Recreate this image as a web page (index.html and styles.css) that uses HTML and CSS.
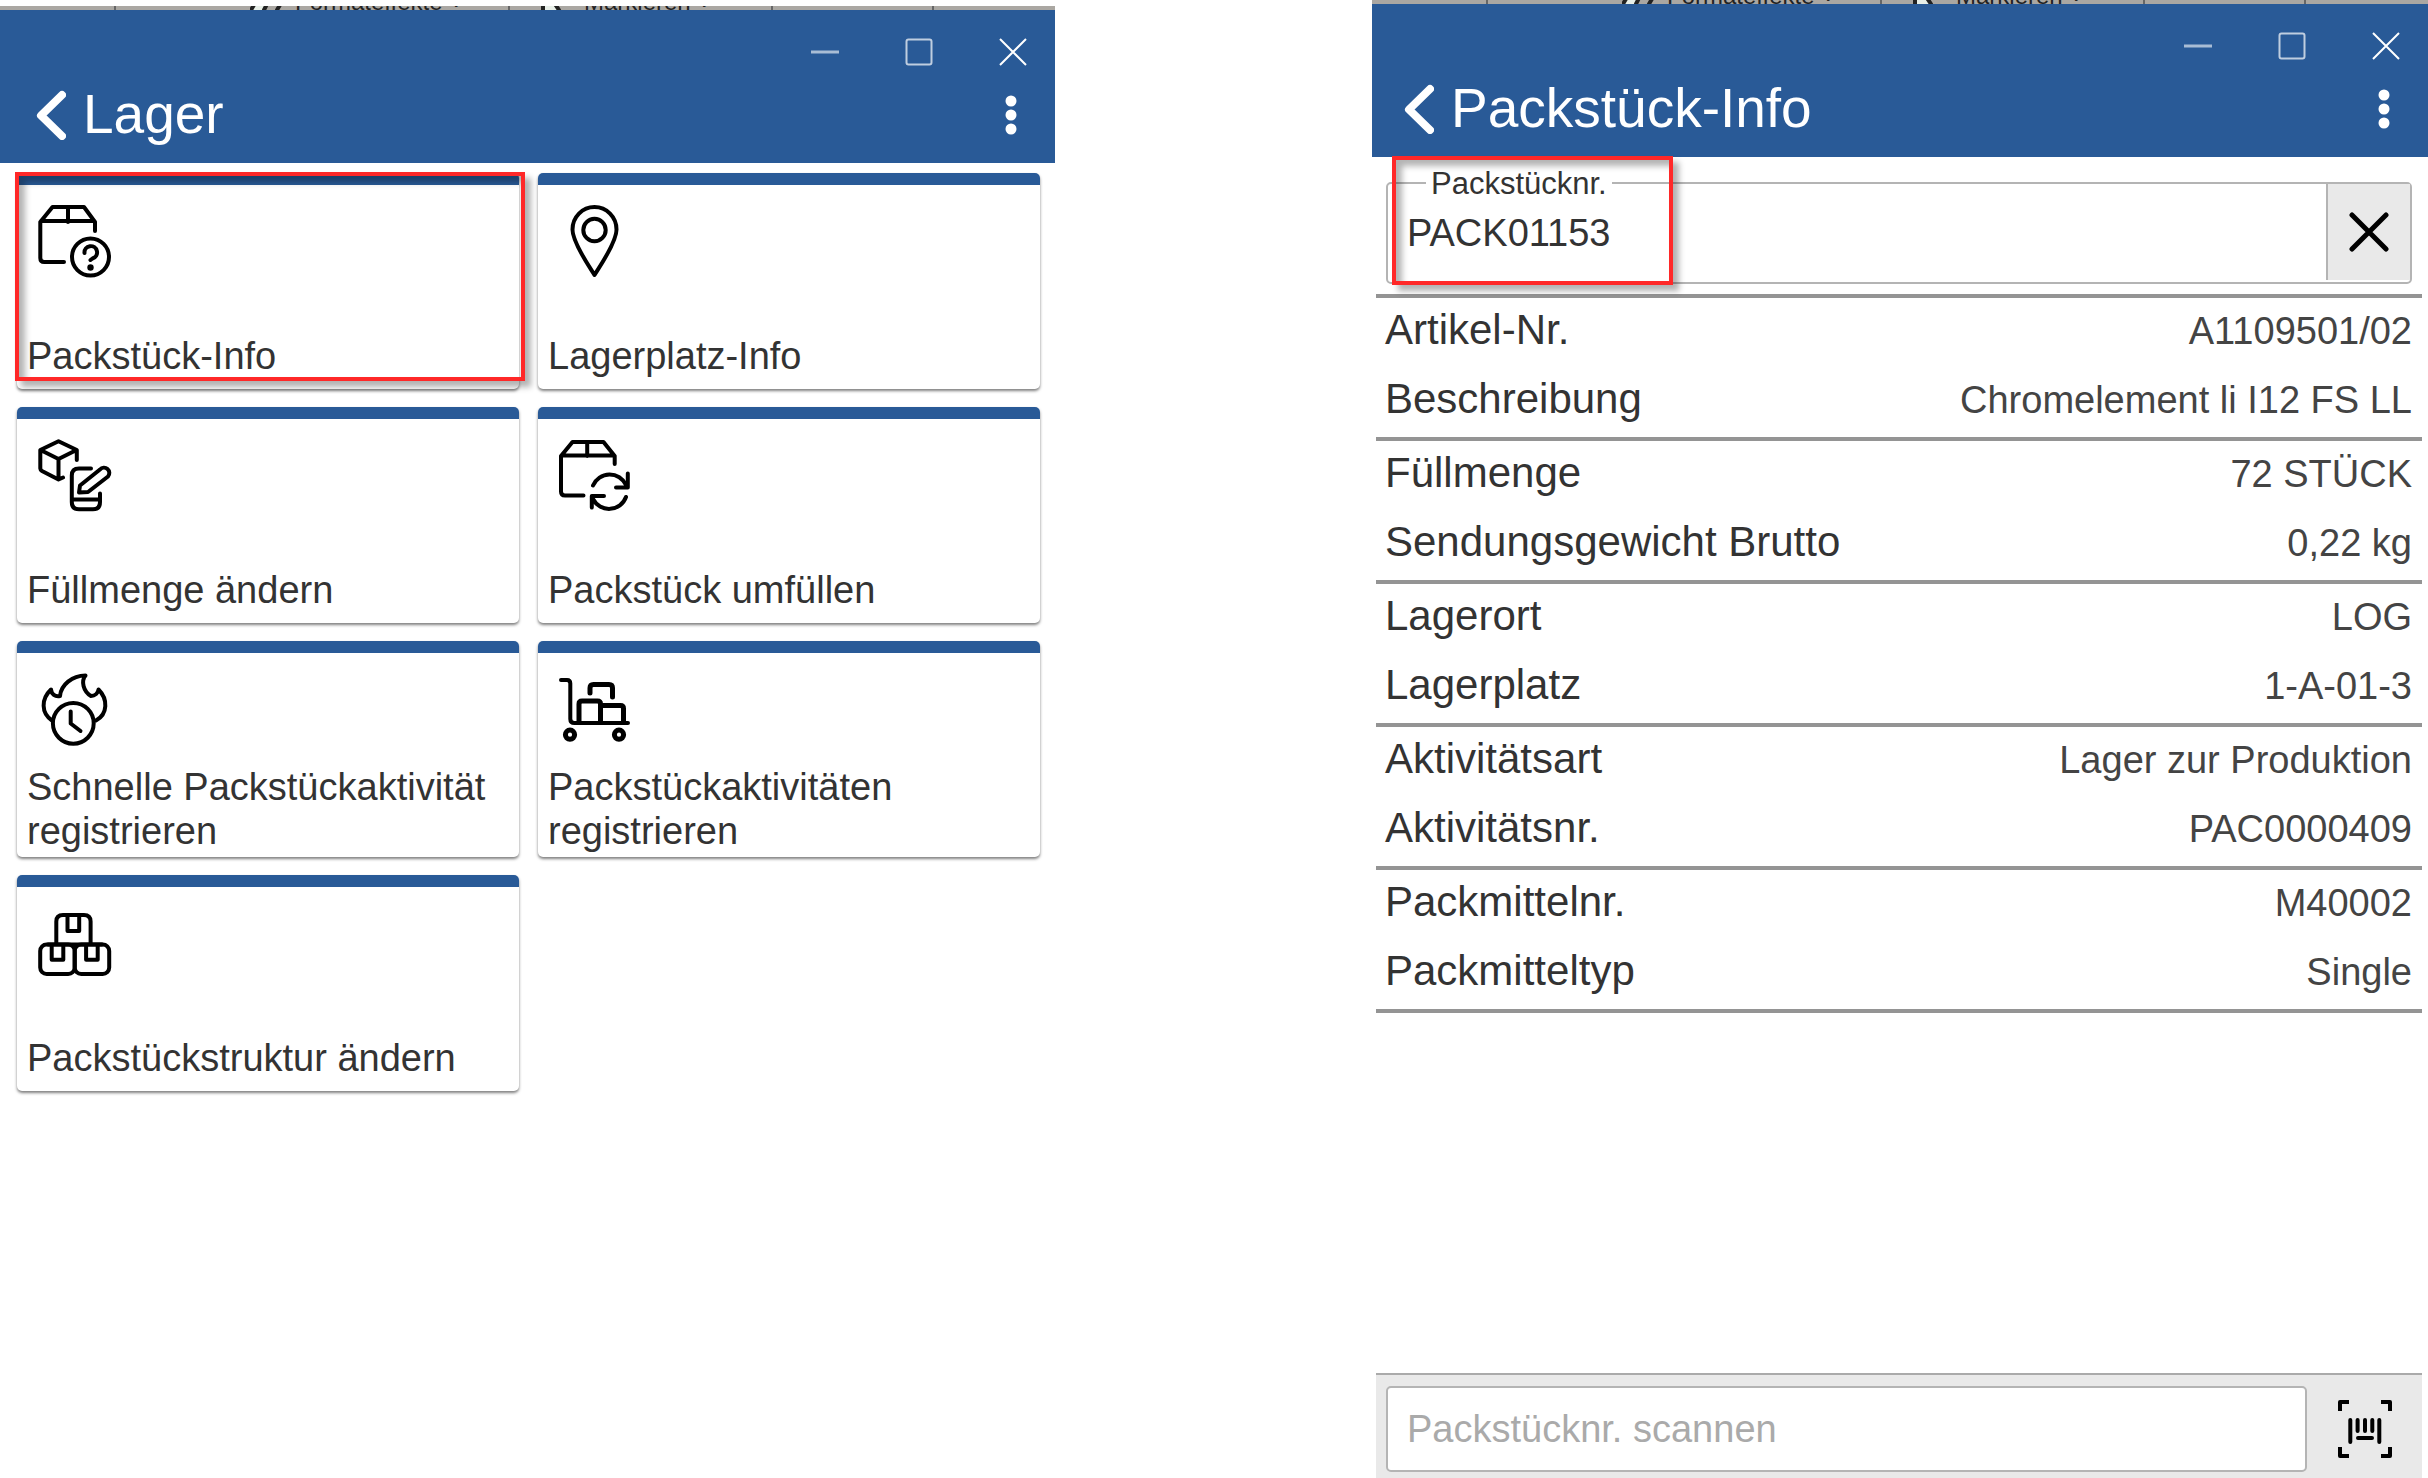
FILE: index.html
```html
<!DOCTYPE html>
<html lang="de">
<head>
<meta charset="utf-8">
<meta name="viewport" content="width=device-width, initial-scale=1">
<title>Lager – Packstück-Info</title>
<link rel="stylesheet" href="styles.css">
</head>
<body>
<div class="page">

  <section class="window window--menu">
    <div class="strip" aria-hidden="true">
      <span class="strip__cell strip__cell--first"></span>
      <span class="strip__cell strip__cell--effects"><svg class="strip__icon" viewBox="0 0 36 16"><path class="strip__paper" d="M8 4H20L14 16H1Z"/><path d="M8 4L1 16M20 4L14 16M34 4L27 16"/></svg>Formateffekte ˅</span>
      <span class="strip__cell strip__cell--mark"><svg class="strip__icon" viewBox="0 0 36 16"><path class="strip__paper" d="M4 0H12L20 16H4Z"/><path d="M4 0V16M12 4L20 16"/></svg>Markieren ˅</span>
      <span class="strip__cell strip__cell--last"></span>
    </div>
    <header class="header">
      <div class="controls">
        <button class="control" type="button" aria-label="Minimieren"><svg width="28" height="28" viewBox="0 0 28 28"><path d="M0 14H28" stroke-width="3" opacity=".6"/></svg></button>
        <button class="control" type="button" aria-label="Maximieren"><svg width="28" height="28" viewBox="0 0 28 28"><rect x="1.500" y="1.500" width="25" height="25" rx="2" stroke-width="2" opacity=".7"/></svg></button>
        <button class="control" type="button" aria-label="Schließen"><svg width="28" height="28" viewBox="0 0 28 28"><path d="M1 1L27 27M27 1L1 27" stroke-width="2"/></svg></button>
      </div>
      <div class="titlebar">
        <a class="back" href="#" aria-label="Zurück"><svg width="30" height="50" viewBox="0 0 30 50"><path d="M26 5L5 25.500L26 46" stroke-width="8"/></svg></a>
        <h1 class="title">Lager</h1>
        <button class="more" type="button" aria-label="Menü"><svg width="12" height="40" viewBox="0 0 12 40"><circle cx="6" cy="6" r="5.500"/><circle cx="6" cy="20" r="5.500"/><circle cx="6" cy="34" r="5.500"/></svg></button>
      </div>
    </header>

    <ul class="tiles">
      <li class="tiles__item">
        <a class="tile" href="#">
          <svg class="tile__icon" viewBox="0 0 74 74"><path d="M57 26V17L46 2H14.500L2.300 17V53Q2.300 57 6.300 57H26M3 16H56M30 2V17"/><circle cx="52.500" cy="52" r="18.500"/><path d="M46.500 48A6.300 6.300 0 1 1 54.500 53.500L52.500 55"/><circle class="solid" cx="52.500" cy="62.500" r="3.200"/></svg>
          <span class="tile__label">Packstück-Info</span>
        </a>
        <span class="marker marker--tile"></span>
      </li>
      <li class="tiles__item">
        <a class="tile" href="#">
          <svg class="tile__icon" viewBox="0 0 74 74"><path d="M35.500 70C32 64 13.500 38 13.500 24.500A22 22.500 0 0 1 57.500 24.500C57.500 38 39 64 35.500 70Z"/><circle cx="35.500" cy="25" r="11.200"/></svg>
          <span class="tile__label">Lagerplatz-Info</span>
        </a>
      </li>
      <li class="tiles__item">
        <a class="tile" href="#">
          <svg class="tile__icon" viewBox="0 0 74 74"><path d="M38.800 21V11L20.500 2.300L2.300 11V29.500Q2.300 31 4 32L20.500 40.500L25 38.500M2.500 11L20.500 20L38.500 11M20.500 20V40"/><path d="M53 29.500H41Q33.800 29.500 33.800 36.500V63Q33.800 70.300 41 70.300H55Q62 70.300 62 63V54.500M34 60.500H61.500"/><path d="M41 53.500L42 46.500L62 30.500A5.200 5.200 0 0 1 70 37.500L50 53Z"/></svg>
          <span class="tile__label">Füllmenge ändern</span>
        </a>
      </li>
      <li class="tiles__item">
        <a class="tile" href="#">
          <svg class="tile__icon" viewBox="0 0 74 74"><path d="M55.700 25V17L44.500 3H13.500L2 17V52.500Q2 56.500 6 56.500H24.500M2.500 16.500H55M28.200 3V17"/><path d="M34 46.500A18 18 0 0 1 67 46M68.800 34.500V48.500H57M67 58A18 18 0 0 1 34 60M32.800 68.500V57H45"/></svg>
          <span class="tile__label">Packstück umfüllen</span>
        </a>
      </li>
      <li class="tiles__item">
        <a class="tile" href="#">
          <svg class="tile__icon" viewBox="0 0 74 74"><circle cx="35.300" cy="50.300" r="20.400"/><path d="M32.700 38.500V50.500L42.500 58"/><path d="M14 47.500C3 40 3 26 13 16.500C13.500 21 17 24 22 23C23 12 34 2.500 47.500 2.500C43 8 45 18 53 23C57 23 60 20 60.500 16.500C70 26 70 41 58 47.500"/></svg>
          <span class="tile__label">Schnelle Packstückaktivität registrieren</span>
        </a>
      </li>
      <li class="tiles__item">
        <a class="tile" href="#">
          <svg class="tile__icon" viewBox="0 0 74 74"><path d="M2 7H8Q11.300 7 11.300 10.500V46Q11.300 50 15.500 50H69"/><path stroke-width="5" d="M20 49V31Q20 28 23 28H38.500Q41.500 28 41.500 31V49M42 32.500H61.500Q64.500 32.500 64.500 35.500V49M31 20V15Q31 11.500 34.500 11.500H50Q53.500 11.500 53.500 15V24"/><circle stroke-width="5" cx="11" cy="61.700" r="4.600"/><circle stroke-width="5" cx="60" cy="61.700" r="4.600"/></svg>
          <span class="tile__label">Packstückaktivitäten registrieren</span>
        </a>
      </li>
      <li class="tiles__item">
        <a class="tile" href="#">
          <svg class="tile__icon" viewBox="0 0 74 74"><path d="M18.300 37V14.500Q18.300 8 25 8H46Q52.600 8 52.600 14.500V37M29.500 8V24H41.200V8"/><rect x="2.200" y="37.500" width="34.500" height="29.500" rx="6.500"/><rect x="36.700" y="37.500" width="34.500" height="29.500" rx="6.500"/><path d="M13.700 38V52.800H25.300V38M48.100 38V52.800H59.700V38"/><path d="M10 37.500H64"/></svg>
          <span class="tile__label">Packstückstruktur ändern</span>
        </a>
      </li>
    </ul>
  </section>

  <section class="window window--detail">
    <div class="strip" aria-hidden="true">
      <span class="strip__cell strip__cell--first"></span>
      <span class="strip__cell strip__cell--effects"><svg class="strip__icon" viewBox="0 0 36 16"><path class="strip__paper" d="M8 4H20L14 16H1Z"/><path d="M8 4L1 16M20 4L14 16M34 4L27 16"/></svg>Formateffekte ˅</span>
      <span class="strip__cell strip__cell--mark"><svg class="strip__icon" viewBox="0 0 36 16"><path class="strip__paper" d="M4 0H12L20 16H4Z"/><path d="M4 0V16M12 4L20 16"/></svg>Markieren ˅</span>
      <span class="strip__cell strip__cell--last"></span>
    </div>
    <header class="header">
      <div class="controls">
        <button class="control" type="button" aria-label="Minimieren"><svg width="28" height="28" viewBox="0 0 28 28"><path d="M0 14H28" stroke-width="3" opacity=".6"/></svg></button>
        <button class="control" type="button" aria-label="Maximieren"><svg width="28" height="28" viewBox="0 0 28 28"><rect x="1.500" y="1.500" width="25" height="25" rx="2" stroke-width="2" opacity=".7"/></svg></button>
        <button class="control" type="button" aria-label="Schließen"><svg width="28" height="28" viewBox="0 0 28 28"><path d="M1 1L27 27M27 1L1 27" stroke-width="2"/></svg></button>
      </div>
      <div class="titlebar">
        <a class="back" href="#" aria-label="Zurück"><svg width="30" height="50" viewBox="0 0 30 50"><path d="M26 5L5 25.500L26 46" stroke-width="8"/></svg></a>
        <h1 class="title">Packstück-Info</h1>
        <button class="more" type="button" aria-label="Menü"><svg width="12" height="40" viewBox="0 0 12 40"><circle cx="6" cy="6" r="5.500"/><circle cx="6" cy="20" r="5.500"/><circle cx="6" cy="34" r="5.500"/></svg></button>
      </div>
    </header>

    <div class="lookup">
      <div class="field">
        <label class="field__label" for="package">Packstücknr.</label>
        <input class="field__input" id="package" type="text" value="PACK01153">
        <button class="field__clear" type="button" aria-label="Löschen"><svg width="40" height="40" viewBox="0 0 40 40"><path d="M3 3L37 37M37 3L3 37"/></svg></button>
      </div>
      <span class="marker marker--field"></span>
    </div>

    <div class="details">
      <dl class="group">
        <div class="row"><dt>Artikel-Nr.</dt><dd>A1109501/02</dd></div>
        <div class="row"><dt>Beschreibung</dt><dd>Chromelement li I12 FS LL</dd></div>
      </dl>
      <dl class="group">
        <div class="row"><dt>Füllmenge</dt><dd>72 STÜCK</dd></div>
        <div class="row"><dt>Sendungsgewicht Brutto</dt><dd>0,22 kg</dd></div>
      </dl>
      <dl class="group">
        <div class="row"><dt>Lagerort</dt><dd>LOG</dd></div>
        <div class="row"><dt>Lagerplatz</dt><dd>1-A-01-3</dd></div>
      </dl>
      <dl class="group">
        <div class="row"><dt>Aktivitätsart</dt><dd>Lager zur Produktion</dd></div>
        <div class="row"><dt>Aktivitätsnr.</dt><dd>PAC0000409</dd></div>
      </dl>
      <dl class="group">
        <div class="row"><dt>Packmittelnr.</dt><dd>M40002</dd></div>
        <div class="row"><dt>Packmitteltyp</dt><dd>Single</dd></div>
      </dl>
    </div>

    <footer class="scan">
      <input class="scan__input" type="text" placeholder="Packstücknr. scannen" aria-label="Packstücknr. scannen">
      <button class="scan__button" type="button" aria-label="Barcode scannen"><svg width="54" height="58" viewBox="0 0 54 58"><path d="M2 11V2H11M43 2H52V11M2 47V56H11M43 56H52V47" stroke-linecap="butt"/><path d="M12.300 20V42M19.600 20V31M27 20V31M34.300 20V31M41.300 20V42M20 38H34"/></svg></button>
    </footer>
  </section>

</div>
</body>
</html>
```
FILE: styles.css
```css
:root {
  --blue: #295a97;
  --text: #333;
  --line: #b4b4b4;
  --rule: #949494;
  --panel: #e9e9e9;
  --red: #ff2828;
}

* {
  box-sizing: border-box;
}

body {
  margin: 0;
  background: #fff;
  color: var(--text);
  font: 38px/44px "Liberation Sans", Arial, sans-serif;
}

svg {
  display: block;
  fill: none;
  stroke: currentColor;
  stroke-width: 4;
  stroke-linecap: round;
  stroke-linejoin: round;
}

button {
  display: flex;
  align-items: center;
  justify-content: center;
  margin: 0;
  padding: 0;
  border: 0;
  background: none;
  color: inherit;
  cursor: pointer;
}

input {
  min-width: 0;
  margin: 0;
  border: 0;
  background: none;
  color: inherit;
  font: inherit;
  outline: 0;
}

.page {
  display: grid;
  grid-template-columns: 1055fr 317fr 1056fr;
  min-height: 100vh;
}

.window {
  --inset: 36px;
  display: flex;
  flex-direction: column;
  min-width: 0;
}

.window--menu {
  padding-top: 6px;
}

.window--detail {
  --inset: 32px;
  grid-column: 3;
}

/* sliver of the toolbar that shows above each window */
.strip {
  display: flex;
  align-items: flex-end;
  height: 4px;
  overflow: hidden;
  background: #aaa7a2;
  color: #222;
  font-size: 24px;
  line-height: 16px;
}

.strip__cell {
  display: flex;
  flex: none;
  height: 16px;
  border-right: 2px solid #666;
  white-space: nowrap;
}

.strip__icon {
  width: 36px;
  height: 16px;
  margin-right: 9px;
}

.strip__paper {
  fill: #e8efe8;
  stroke: none;
}

.strip__cell--first {
  width: 116px;
}

.strip__cell--effects {
  width: 394px;
  padding-left: 134px;
}

.strip__cell--mark {
  width: 263px;
  padding-left: 29px;
}

.strip__cell--last {
  width: 161px;
}

.header {
  padding: 10px 0 18px;
  background: var(--blue);
  color: #fff;
}

.controls {
  display: flex;
  justify-content: flex-end;
  gap: 10px;
}

.control {
  width: 84px;
  height: 64px;
}

.control svg {
  stroke-linecap: butt;
}

.titlebar {
  display: flex;
  align-items: center;
  gap: 17px;
  height: 61px;
  padding-left: var(--inset);
}

.back {
  color: inherit;
}

.title {
  flex: 1;
  margin: 0;
  font-size: 55px;
  font-weight: 400;
  line-height: 61px;
}

.more {
  width: 88px;
  height: 61px;
}

.more svg {
  fill: currentColor;
  stroke: none;
}

.tiles {
  display: grid;
  grid-template-columns: 1fr 1fr;
  gap: 18px 19px;
  margin: 0;
  padding: 10px 15px 18px 17px;
  list-style: none;
}

.tiles__item {
  position: relative;
}

.tile {
  display: flex;
  flex-direction: column;
  justify-content: space-between;
  min-height: 216px;
  padding: 20px 10px 4px;
  border-top: 12px solid var(--blue);
  border-radius: 5px;
  box-shadow: 0 2px 3px rgba(0, 0, 0, .5);
  color: inherit;
  text-decoration: none;
}

.tile__icon {
  width: 74px;
  height: 74px;
  margin-left: 11px;
  color: #000;
}

.solid {
  fill: currentColor;
  stroke: none;
}

.tile__label {
  min-height: 51px;
}

/* red highlight frames */
.marker {
  position: absolute;
  border: 4px solid var(--red);
  box-shadow: 6px 6px 6px rgba(0, 0, 0, .3), inset 6px 6px 6px rgba(0, 0, 0, .3);
  pointer-events: none;
}

.marker--tile {
  inset: -1px -6px 8px -2px;
}

.marker--field {
  top: -1px;
  left: 20px;
  width: 281px;
  height: 129px;
}

.lookup {
  position: relative;
  padding: 25px 16px 10px 14px;
}

.field {
  position: relative;
  display: flex;
  height: 102px;
  border: 2px solid var(--line);
  border-radius: 5px;
}

.field__label {
  position: absolute;
  top: -18px;
  left: 38px;
  padding: 0 5px;
  background: #fff;
  font-size: 31px;
  line-height: 36px;
}

.field__input {
  flex: 1;
  padding: 0 19px;
}

.field__clear {
  width: 84px;
  margin-bottom: 2px;
  border-left: 2px solid var(--line);
  background: var(--panel);
  color: #000;
}

.field__clear svg {
  stroke-width: 5;
}

.details {
  margin: 0 6px 0 4px;
  border-top: 4px solid var(--rule);
}

.group {
  display: grid;
  gap: 21px;
  margin: 0;
  padding: 8px 10px 14px 9px;
  border-bottom: 4px solid var(--rule);
}

.row {
  display: flex;
  align-items: baseline;
  justify-content: space-between;
}

.row dt {
  font-size: 42px;
  line-height: 48px;
}

.row dd {
  margin: 0;
  color: #444;
}

.scan {
  display: flex;
  margin: auto 6px 0 4px;
  padding: 11px 0 6px 10px;
  border-top: 2px solid #aaa;
  background: var(--panel);
}

.scan__input {
  flex: 1;
  height: 86px;
  padding: 0 19px;
  border: 2px solid var(--line);
  border-radius: 5px;
  background: #fff;
}

.scan__input::placeholder {
  color: #aaa;
  opacity: 1;
}

.scan__button {
  width: 115px;
  color: #000;
}
```
